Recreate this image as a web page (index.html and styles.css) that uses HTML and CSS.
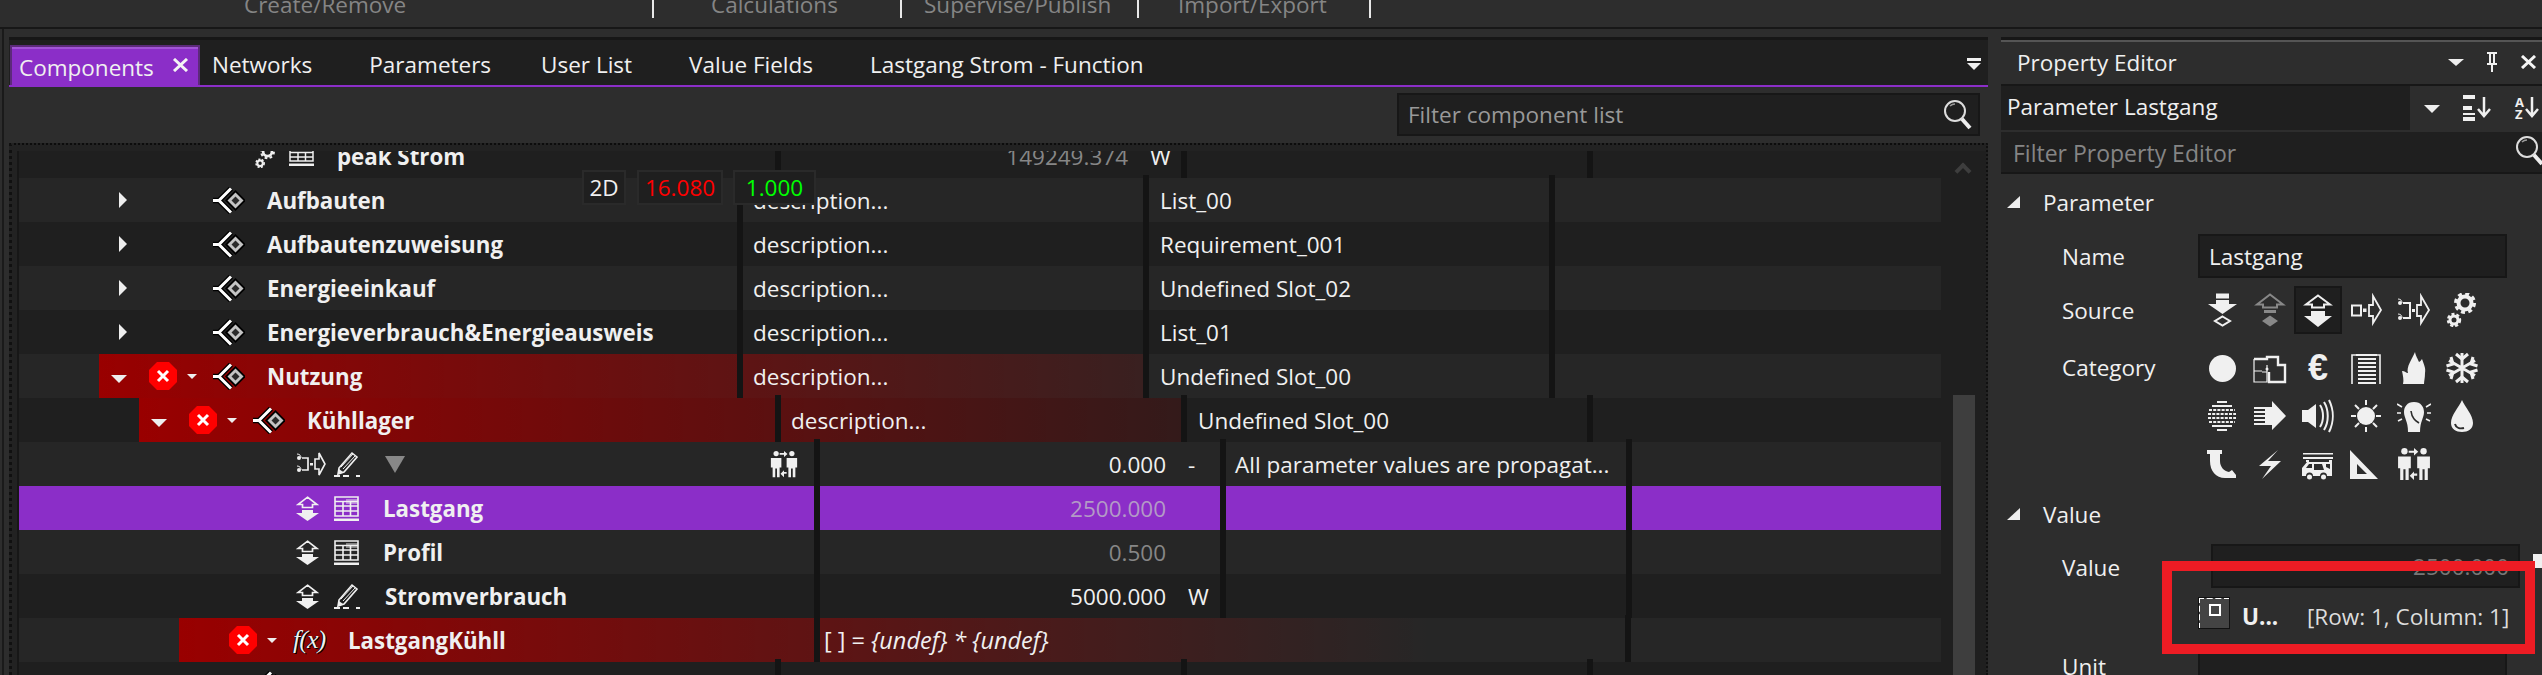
FILE: index.html
```html
<!DOCTYPE html>
<html lang="de">
<head>
<meta charset="utf-8">
<title>Components</title>
<link rel="stylesheet" href="styles.css">
</head>
<body>
<svg class="defs" xmlns="http://www.w3.org/2000/svg">
  <symbol id="close" viewBox="0 0 17 14">
    <path d="M2 1L15 13M15 1L2 13" stroke="#f4f4f4" stroke-width="3"/>
  </symbol>
  <symbol id="comp" viewBox="0 0 32 27">
    <path d="M22.500 3L33 13.500L22.500 24L12 13.500Z" fill="#000"/>
    <path d="M22.500 5.500L30.500 13.500L22.500 21.500L14.500 13.500Z" fill="#c4c4c4"/>
    <path d="M22.500 9.500L26.500 13.500L22.500 17.500L18.500 13.500Z" fill="#2a2a2a"/>
    <path d="M0 13.500H6M18 1.500L6 13.500L18 25.500" fill="none" stroke="#000" stroke-width="5.500"/>
    <path d="M0 13.500H6M18 1.500L6 13.500L18 25.500" fill="none" stroke="#fff" stroke-width="3"/>
  </symbol>
  <symbol id="stop" viewBox="0 0 28 28">
    <path d="M8 0H20L28 8V20L20 28H8L0 20V8Z" fill="#f00"/>
    <path d="M9 9L19 19M19 9L9 19" stroke="#fff" stroke-width="3"/>
  </symbol>
  <symbol id="updown" viewBox="0 0 23 25">
    <path d="M11.500 1.200L21 8.500H16.500V11.500H6.500V8.500H2Z" fill="none" stroke="currentColor" stroke-width="1.700"/>
    <path d="M6 14H17V17H23L11.500 25L0 17H6Z" fill="currentColor"/>
  </symbol>
  <symbol id="table" viewBox="0 0 25 25">
    <path d="M1 1H24V20H1ZM1 5.500H24M1 10H24M1 15H24M9 5.500V20M16.500 5.500V20" fill="none" stroke="currentColor" stroke-width="1.600"/>
    <path d="M0 22.500H25V25H0Z" fill="currentColor"/>
    <path d="M12 3H24V8H12Z" fill="currentColor" opacity=".45"/>
  </symbol>
  <symbol id="grid" viewBox="0 0 25 19">
    <path d="M1 1H24V14H1ZM1 5.500H24M1 10H24M9 5.500V14M16.500 5.500V14" fill="none" stroke="currentColor" stroke-width="1.500"/>
    <path d="M0 16.500H25V19H0Z" fill="currentColor"/>
  </symbol>
  <symbol id="pencil" viewBox="0 0 26 27">
    <path d="M5 17L18 2L23 6L10 21L4 23Z" fill="none" stroke="currentColor" stroke-width="1.600"/>
    <path d="M7 16L19 3M9 18L21 5" stroke="currentColor" stroke-width="1"/>
    <path d="M4 23L5 18L9 21Z" fill="currentColor"/>
    <path d="M0 25H6M9 25H15M22 25H26" stroke="currentColor" stroke-width="2"/>
  </symbol>
  <symbol id="flow" viewBox="0 0 30 24">
    <circle cx="3" cy="6" r="2" fill="currentColor"/><circle cx="3" cy="18" r="2" fill="currentColor"/>
    <path d="M1 2C4 2 5 4 5 6M1 14C4 14 5 16 5 18" fill="none" stroke="currentColor" stroke-width="1"/>
    <path d="M6 6H12V18H6" fill="none" stroke="currentColor" stroke-width="1.700"/>
    <path d="M14 11H17V13.500H14Z" fill="currentColor"/>
    <path d="M19 7H23V1L29 12L23 23V17H19Z" fill="none" stroke="currentColor" stroke-width="1.600"/>
  </symbol>
  <symbol id="gears" viewBox="0 0 34 34">
    <circle cx="20" cy="10" r="6.500" fill="none" stroke="currentColor" stroke-width="4"/>
    <circle cx="20" cy="10" r="9.500" fill="none" stroke="currentColor" stroke-width="3" stroke-dasharray="4 3.450"/>
    <circle cx="9" cy="27" r="4" fill="none" stroke="currentColor" stroke-width="3"/>
    <circle cx="9" cy="27" r="6" fill="none" stroke="currentColor" stroke-width="2.400" stroke-dasharray="3 2"/>
  </symbol>
  <symbol id="persons" viewBox="0 0 32 30">
    <circle cx="7" cy="3" r="3" fill="currentColor"/><circle cx="25" cy="3" r="3" fill="currentColor"/>
    <path d="M1 8H13V19H11V30H8V20H6V30H3V19H1Z" fill="currentColor"/>
    <path d="M19 8H31V19H29V30H26V20H24V30H21V19H19Z" fill="currentColor"/>
    <path d="M11 2.500H16V0L20 3.500L16 7V4.500H11Z" fill="currentColor"/>
    <path d="M19 24H16V22L12 26L16 30V26H19Z" fill="currentColor"/>
  </symbol>
  <symbol id="search" viewBox="0 0 30 32">
    <circle cx="12" cy="12" r="10" fill="none" stroke="#ddd" stroke-width="2"/>
    <path d="M19 20L27 29" stroke="#eee" stroke-width="4"/>
    <path d="M7 7C8 6 10 5 12 5" fill="none" stroke="#999" stroke-width="1.500"/>
  </symbol>
  <symbol id="i-in" viewBox="0 0 34 34">
    <path d="M11 .5H24V5.500H11ZM11 7H24V11H32L17.500 21L3 11H11Z" fill="currentColor"/>
    <path d="M17.500 23.500L25 28L17.500 32.500L10 28Z" fill="none" stroke="currentColor" stroke-width="2"/>
  </symbol>
  <symbol id="i-out" viewBox="0 0 34 34">
    <path d="M17 1.500L30 11.500H24V14.500H10V11.500H4Z" fill="none" stroke="currentColor" stroke-width="2"/>
    <path d="M11 17H23V20H11ZM17 22.500L25 28L17 33.500L9 28Z" fill="currentColor"/>
  </symbol>
  <symbol id="i-both" viewBox="0 0 34 34">
    <path d="M17 2.500L29 11.500H23V14.500H11V11.500H5Z" fill="none" stroke="currentColor" stroke-width="2"/>
    <path d="M10 18H24V23H31L17 34L3 23H10Z" fill="currentColor"/>
  </symbol>
  <symbol id="i-port" viewBox="0 0 34 34">
    <path d="M3 12.500H12V22.500H3Z" fill="none" stroke="currentColor" stroke-width="2"/>
    <path d="M14 15.500H17.500V19H14Z" fill="currentColor"/>
    <path d="M20 12H24V3L32 17L24 30V23H20Z" fill="none" stroke="currentColor" stroke-width="1.800"/>
  </symbol>
  <symbol id="i-fork" viewBox="0 0 34 34">
    <circle cx="3" cy="10" r="2" fill="currentColor"/><circle cx="3" cy="25" r="2" fill="currentColor"/>
    <path d="M1 6C4 6 5 8 5 10M1 21C4 21 5 23 5 25" fill="none" stroke="currentColor" stroke-width="1"/>
    <path d="M6 10H13V25H6" fill="none" stroke="currentColor" stroke-width="2"/>
    <path d="M15 16H18V19H15Z" fill="currentColor"/>
    <path d="M20 12H24V3L32 17L24 30V23H20Z" fill="none" stroke="currentColor" stroke-width="1.800"/>
  </symbol>
  <symbol id="c-plan" viewBox="0 0 34 34">
    <path d="M1 8H14V6H25V14H32V31H16V21" fill="none" stroke="currentColor" stroke-width="2.400"/>
    <path d="M1 8V31H14V21H9M1 20H9M14 14V21" fill="none" stroke="currentColor" stroke-width="1.200"/>
    <circle cx="14" cy="18" r="1.500" fill="currentColor"/>
  </symbol>
  <symbol id="c-doc" viewBox="0 0 34 34">
    <path d="M3 33V4H31V33" fill="none" stroke="currentColor" stroke-width="1.600"/>
    <path d="M7 4H28M9 8H27M9 12H27M9 16H27M9 20H27M9 24H27M9 28H27M9 32H27" stroke="currentColor" stroke-width="2"/>
  </symbol>
  <symbol id="c-flame" viewBox="0 0 34 34">
    <path d="M18 1C19 6 21 8 22 11C24 10 24 9 25 8C27 14 29 17 28 22C28 27 27 30 27 33H6C7 29 6 25 5 20C8 20 9 22 11 22C9 16 15 8 18 1Z" fill="currentColor"/>
  </symbol>
  <symbol id="c-snow" viewBox="0 0 34 34">
    <g stroke="currentColor" stroke-width="3" fill="none">
      <path d="M17 2V32M4 9.500L30 24.500M4 24.500L30 9.500"/>
      <path d="M11 3L17 8L23 3M11 31L17 26L23 31M1.500 15L8 13L6 6M32.500 15L26 13L28 6M1.500 19L8 21L6 28M32.500 19L26 21L28 28"/>
    </g>
  </symbol>
  <symbol id="c-globe" viewBox="0 0 34 34">
    <g stroke="currentColor" stroke-width="2" fill="none">
      <path d="M12 3H22M7 7H27"/>
      <path d="M4 11H30M3 15H31M3 19H31M4 23H30" stroke-dasharray="3 1.200"/>
      <path d="M7 27H27M12 31H22"/>
    </g>
  </symbol>
  <symbol id="c-arrow" viewBox="0 0 34 34">
    <path d="M1 9H12M1 13H12M1 17H12M1 21H12M1 25H12" stroke="currentColor" stroke-width="2"/>
    <path d="M12 8H19V2L33 17L19 31V26H12Z" fill="currentColor"/>
  </symbol>
  <symbol id="c-sound" viewBox="0 0 34 34">
    <path d="M1 11H7L15 5V29L7 23H1Z" fill="currentColor"/>
    <path d="M19 6C23 12 23 22 19 28M23 3C28 11 28 23 23 31M28 1C33 11 33 23 28 33" fill="none" stroke="currentColor" stroke-width="2"/>
  </symbol>
  <symbol id="c-sun" viewBox="0 0 34 34">
    <circle cx="17" cy="17" r="9" fill="currentColor"/>
    <path d="M17 1V6M17 28V33M2 17H7M27 17H32M6 6L10 10M24 24L28 28M28 6L24 10M10 24L6 28" stroke="currentColor" stroke-width="2"/>
  </symbol>
  <symbol id="c-bulb" viewBox="0 0 34 34">
    <path d="M17 3C24 3 27 8 27 13C27 19 23 22 23 33H11C11 22 7 19 7 13C7 8 10 3 17 3Z" fill="currentColor"/>
    <path d="M14 12C15 20 19 22 22 24" fill="none" stroke="#2d2d2d" stroke-width="1.600"/>
    <path d="M0 5L5 8M34 5L29 8M0 14H4M34 14H30M1 22L5 20M33 22L29 20" stroke="currentColor" stroke-width="1.600"/>
  </symbol>
  <symbol id="c-drop" viewBox="0 0 34 34">
    <path d="M17 1C20 8 28 16 28 24C28 30 23 33 17 33C11 33 6 30 6 24C6 16 14 8 17 1Z" fill="currentColor"/>
    <path d="M10 25C11 29 15 30 19 29" fill="none" stroke="#2d2d2d" stroke-width="2"/>
  </symbol>
  <symbol id="c-pipe" viewBox="0 0 34 34">
    <path d="M2 3H17V7H15V14C15 20 19 24 24 25L27 23L31 28V31H20C11 31 5 24 5 14V7H2Z" fill="currentColor"/>
  </symbol>
  <symbol id="c-bolt" viewBox="0 0 34 34">
    <path d="M25 3L6 19H18L9 32L28 14H15Z" fill="currentColor"/>
  </symbol>
  <symbol id="c-van" viewBox="0 0 34 34">
    <path d="M2 6H32V7.500H2ZM2 10H32V12H2ZM5 13H8V15H5ZM28 13H31V15H28Z" fill="currentColor"/>
    <path d="M1 29V21L6 15H31V29H26A3.500 3.500 0 0 0 19 29H12A3.500 3.500 0 0 0 5 29ZM8 17L5 21H11V17ZM13 17V23H23L21 17ZM25 17V20L29 22V17Z" fill="currentColor" fill-rule="evenodd"/>
    <circle cx="8.500" cy="30" r="2.500" fill="currentColor"/><circle cx="22.500" cy="30" r="2.500" fill="currentColor"/>
  </symbol>
  <symbol id="c-square" viewBox="0 0 34 34">
    <path d="M1 3L29 32H1ZM8 17V27H18Z" fill="currentColor" fill-rule="evenodd"/>
  </symbol>
</svg>

<header class="topbar">
  <span class="top-a">Create/Remove</span><i class="top-sep sep-a"></i>
  <span class="top-b">Calculations</span><i class="top-sep sep-b"></i>
  <span class="top-c">Supervise/Publish</span><i class="top-sep sep-c"></i>
  <span class="top-d">Import/Export</span><i class="top-sep sep-d"></i>
</header>

<main class="main">
  <section class="left">
    <nav class="tabs">
      <div class="tab active">Components<svg class="tab-x"><use href="#close"/></svg></div>
      <div class="tab">Networks</div>
      <div class="tab tab-tight">Parameters</div>
      <div class="tab">User List</div>
      <div class="tab">Value Fields</div>
      <div class="tab">Lastgang Strom - Function</div>
      <div class="tab-menu"><i class="menu-bar"></i><i class="menu-tri"></i></div>
    </nav>
    <div class="toolbar">
      <div class="filter">
        <span>Filter component list</span>
        <svg class="search-ic"><use href="#search"/></svg>
      </div>
    </div>
    <div class="tree">
      <div class="rows">
        <div class="row d2 peak">
          <div class="band">
            <div class="hot plain">
              <div class="cell name"><span class="peak-pad"><svg class="gear-s"><use href="#gears"/></svg><svg class="grid-s"><use href="#grid"/></svg></span><b>peak Strom</b></div>
              <div class="cell val"><span class="num dim">149249.374</span><span class="unit">W</span></div>
            </div>
            <div class="cell col3"></div><div class="cell end"></div>
          </div>
        </div>
        <div class="row alt d1"><div class="band"><div class="hot plain">
          <div class="cell name"><i class="slot-e"><i class="tri-r"></i></i><i class="slot-s"></i><i class="slot-d"></i><svg class="comp"><use href="#comp"/></svg><b>Aufbauten</b></div>
          <div class="cell val"><span class="txt">description...</span></div></div>
          <div class="cell col3"><span class="txt">List_00</span></div><div class="cell end"></div></div></div>
        <div class="row d1"><div class="band"><div class="hot plain">
          <div class="cell name"><i class="slot-e"><i class="tri-r"></i></i><i class="slot-s"></i><i class="slot-d"></i><svg class="comp"><use href="#comp"/></svg><b>Aufbautenzuweisung</b></div>
          <div class="cell val"><span class="txt">description...</span></div></div>
          <div class="cell col3"><span class="txt">Requirement_001</span></div><div class="cell end"></div></div></div>
        <div class="row alt d1"><div class="band"><div class="hot plain">
          <div class="cell name"><i class="slot-e"><i class="tri-r"></i></i><i class="slot-s"></i><i class="slot-d"></i><svg class="comp"><use href="#comp"/></svg><b>Energieeinkauf</b></div>
          <div class="cell val"><span class="txt">description...</span></div></div>
          <div class="cell col3"><span class="txt">Undefined Slot_02</span></div><div class="cell end"></div></div></div>
        <div class="row d1"><div class="band"><div class="hot plain">
          <div class="cell name"><i class="slot-e"><i class="tri-r"></i></i><i class="slot-s"></i><i class="slot-d"></i><svg class="comp"><use href="#comp"/></svg><b>Energieverbrauch&amp;Energieausweis</b></div>
          <div class="cell val"><span class="txt">description...</span></div></div>
          <div class="cell col3"><span class="txt">List_01</span></div><div class="cell end"></div></div></div>
        <div class="row alt d1"><div class="band"><div class="hot">
          <div class="cell name"><i class="slot-e"><i class="tri-d"></i></i><i class="slot-s"><svg class="stop"><use href="#stop"/></svg></i><i class="slot-d"><i class="tri-s"></i></i><svg class="comp"><use href="#comp"/></svg><b>Nutzung</b></div>
          <div class="cell val"><span class="txt">description...</span></div></div>
          <div class="cell col3"><span class="txt">Undefined Slot_00</span></div><div class="cell end"></div></div></div>
        <div class="row d2"><div class="band"><div class="hot">
          <div class="cell name"><i class="slot-e"><i class="tri-d"></i></i><i class="slot-s"><svg class="stop"><use href="#stop"/></svg></i><i class="slot-d"><i class="tri-s"></i></i><svg class="comp"><use href="#comp"/></svg><b>Kühllager</b></div>
          <div class="cell val"><span class="txt">description...</span></div></div>
          <div class="cell col3"><span class="txt">Undefined Slot_00</span></div><div class="cell end"></div></div></div>
        <div class="row alt d3"><div class="band"><div class="hot plain">
          <div class="cell name param"><svg class="flow"><use href="#flow"/></svg><svg class="pen"><use href="#pencil"/></svg><i class="filter-tri"></i><svg class="people"><use href="#persons"/></svg></div>
          <div class="cell val"><span class="num">0.000</span><span class="unit">-</span></div></div>
          <div class="cell col3"><span class="txt">All parameter values are propagat...</span></div><div class="cell end"></div></div></div>
        <div class="row sel d3"><div class="band"><div class="hot plain">
          <div class="cell name param"><svg class="ud"><use href="#updown"/></svg><svg class="tbl"><use href="#table"/></svg><b>Lastgang</b></div>
          <div class="cell val"><span class="num dim-sel">2500.000</span><span class="unit"></span></div></div>
          <div class="cell col3"></div><div class="cell end"></div></div></div>
        <div class="row alt d3"><div class="band"><div class="hot plain">
          <div class="cell name param"><svg class="ud"><use href="#updown"/></svg><svg class="tbl"><use href="#table"/></svg><b>Profil</b></div>
          <div class="cell val"><span class="num dim">0.500</span><span class="unit"></span></div></div>
          <div class="cell col3"></div><div class="cell end"></div></div></div>
        <div class="row d3"><div class="band"><div class="hot plain">
          <div class="cell name param"><svg class="ud"><use href="#updown"/></svg><svg class="pen"><use href="#pencil"/></svg><b>Stromverbrauch</b></div>
          <div class="cell val"><span class="num">5000.000</span><span class="unit">W</span></div></div>
          <div class="cell col3"></div><div class="cell end"></div></div></div>
        <div class="row alt d3"><div class="band"><div class="hot wide">
          <div class="cell name"><i class="slot-e"></i><i class="slot-s"><svg class="stop"><use href="#stop"/></svg></i><i class="slot-d"><i class="tri-s"></i></i><span class="fx">f(x)</span><b>LastgangKühll</b></div>
          <div class="cell formula"><span class="txt">[ ] = <em>{undef} * {undef}</em></span></div></div>
          <div class="cell end"></div></div></div>
        <div class="row d2"><div class="band"><div class="hot plain">
          <div class="cell name"><i class="slot-e"></i><i class="slot-s"></i><i class="slot-d"></i><svg class="comp"><use href="#comp"/></svg></div>
          <div class="cell val"></div></div>
          <div class="cell col3"></div><div class="cell end"></div></div></div>
      </div>
      <aside class="scroll"><i class="chev"></i><i class="thumb"></i></aside>
      <div class="badges">
        <span class="badge b-2d">2D</span>
        <span class="badge b-red">16.080</span>
        <span class="badge b-green">1.000</span>
      </div>
    </div>
  </section>

  <section class="right">
    <div class="title">
      <span class="title-txt">Property Editor</span>
      <i class="title-tri"></i>
      <svg class="pin" viewBox="0 0 12 20"><path d="M1 0H11V2H9V11H11V13H7V20H5V13H1V11H3V2H1ZM5 2V11H7V2Z" fill="#f0f0f0" fill-rule="evenodd"/></svg>
      <svg class="title-x"><use href="#close"/></svg>
    </div>
    <div class="combo">
      <div class="combo-txt">Parameter Lastgang</div>
      <div class="btn b-drop"><i class="tri-d"></i></div>
      <div class="btn b-sort"><svg viewBox="0 0 28 26"><path d="M0 0H12V4H0ZM0 11H9V15H0ZM0 18H12V20H0ZM0 22H12V26H0Z" fill="#f0f0f0"/><path d="M21 2V20M15 14L21 21L27 14" fill="none" stroke="#f0f0f0" stroke-width="2.500"/></svg></div>
      <div class="btn b-az"><span class="az">A<br>Z</span><svg viewBox="0 0 14 26"><path d="M7 2V20M1 14L7 21L13 14" fill="none" stroke="#f0f0f0" stroke-width="2.500"/></svg></div>
    </div>
    <div class="pfilter">
      <span>Filter Property Editor</span>
      <svg class="psearch"><use href="#search"/></svg>
    </div>
    <div class="pbody">
      <div class="sec sec-a"><i class="sec-tri"></i>Parameter</div>
      <div class="prow p-name"><label>Name</label><div class="input">Lastgang</div></div>
      <div class="pgrid">
        <label class="l-source">Source</label>
        <div class="icons">
          <span class="ic"><svg><use href="#i-in"/></svg></span>
          <span class="ic grey"><svg><use href="#i-out"/></svg></span>
          <span class="ic on"><svg><use href="#i-both"/></svg></span>
          <span class="ic"><svg><use href="#i-port"/></svg></span>
          <span class="ic"><svg><use href="#i-fork"/></svg></span>
          <span class="ic"><svg><use href="#gears"/></svg></span>
        </div>
        <label class="l-cat">Category</label>
        <div class="icons cats">
          <span class="ic"><i class="dot"></i></span>
          <span class="ic"><svg><use href="#c-plan"/></svg></span>
          <span class="ic euro">€</span>
          <span class="ic"><svg><use href="#c-doc"/></svg></span>
          <span class="ic"><svg><use href="#c-flame"/></svg></span>
          <span class="ic"><svg><use href="#c-snow"/></svg></span>
          <span class="ic"><svg><use href="#c-globe"/></svg></span>
          <span class="ic"><svg><use href="#c-arrow"/></svg></span>
          <span class="ic"><svg><use href="#c-sound"/></svg></span>
          <span class="ic"><svg><use href="#c-sun"/></svg></span>
          <span class="ic"><svg><use href="#c-bulb"/></svg></span>
          <span class="ic"><svg><use href="#c-drop"/></svg></span>
          <span class="ic"><svg><use href="#c-pipe"/></svg></span>
          <span class="ic"><svg><use href="#c-bolt"/></svg></span>
          <span class="ic"><svg><use href="#c-van"/></svg></span>
          <span class="ic"><svg><use href="#c-square"/></svg></span>
          <span class="ic"><svg><use href="#persons"/></svg></span>
        </div>
      </div>
      <div class="sec sec-v"><i class="sec-tri"></i>Value</div>
      <div class="prow p-val"><label>Value</label><div class="input right">2500.000</div><i class="val-btn"></i></div>
      <div class="prow p-ref">
        <i class="ref-ic"><i class="ref-sq"></i></i>
        <b class="ref-u">U...</b>
        <span class="ref-t">[Row: 1, Column: 1]</span>
      </div>
      <div class="prow p-unit"><label>Unit</label><div class="input"></div></div>
      <div class="redbox"></div>
    </div>
  </section>
</main>
</body>
</html>
```
FILE: styles.css
```css
* { box-sizing: border-box; }
html, body { margin: 0; height: 675px; overflow: hidden; }
body {
  background: #2d2d2d;
  color: #f0f0f0;
  font-family: "Open Sans", "Noto Sans", "Liberation Sans", sans-serif;
  font-size: 22.5px;
}
i, em { font-style: normal; }
.defs { display: none; }

.topbar {
  height: 29px;
  border-bottom: 2px solid #171717;
  display: flex;
  color: #858585;
  line-height: 10px;
  padding-left: 244px;
  overflow: hidden;
}
.top-sep { width: 2px; height: 18px; background: #e8e8e8; }
.top-a { width: 408px; }
.sep-a { margin-right: 57px; }
.top-b { width: 189px; }
.sep-b { margin-right: 22px; }
.top-c { width: 213px; }
.sep-c { margin-right: 39px; }
.top-d { width: 191px; }

.main {
  display: flex;
  height: 646px;
  margin-left: 2px;
  padding-top: 8px;
  border-left: 2px solid #1a1a1a;
}
.left {
  width: 1979px;
  margin-left: 5px;
  border-top: 3px solid #171717;
  display: flex;
  flex-direction: column;
  min-width: 0;
}
.tabs {
  height: 47px;
  flex: none;
  background: #1f1f1f;
  border-bottom: 2px solid #8b2ec8;
  display: flex;
  align-items: flex-end;
  padding-left: 1px;
  position: relative;
}
.tab {
  height: 40px;
  line-height: 39px;
  padding: 0 12px;
  margin-right: 33px;
  white-space: nowrap;
}
.tab-tight { margin-right: 26px; }
.tab.active {
  width: 190px;
  margin-right: 0;
  padding: 2px 9px 0 7px;
  background: #8b2ec8;
  border: 2px solid #5c2a7a;
  border-bottom: 0;
  box-shadow: inset 0 2px #a255d6;
  display: flex;
  align-items: center;
}
.tab-x { width: 17px; height: 14px; margin: 0 0 4px auto; }
.tab-menu {
  position: absolute;
  right: 7px;
  top: 18px;
  width: 14px;
}
.menu-bar { display: block; height: 3px; background: #f0f0f0; margin-bottom: 2px; }
.menu-tri { display: block; border: 7px solid transparent; border-top-color: #f0f0f0; border-bottom: 0; }

.toolbar {
  height: 56px;
  flex: none;
  display: flex;
  justify-content: flex-end;
  padding: 6px 8px 7px 0;
  background: #2d2d2d;
}
.filter {
  width: 583px;
  background: #1f1f1f;
  border: 2px solid #171717;
  display: flex;
  align-items: center;
  justify-content: space-between;
  padding: 0 5px 0 9px;
  color: #999;
  font-size: 22.500px;
}
.search-ic { width: 30px; height: 32px; }

.tree {
  flex: 1;
  min-height: 0;
  position: relative;
  display: flex;
  border-top: 2px dotted #0c0c0c;
  border-left: 3px dotted #101010;
  border-right: 2px dotted #101010;
  padding: 6px 0 0 5px;
  background: #222;
}
.rows {
  width: 1924px;
  flex: none;
  overflow: hidden;
  border-left: 2px solid #171717;
}
.scroll {
  flex: 1;
  position: relative;
  background: #1f1f1f;
}
.chev {
  position: absolute;
  left: 16px;
  top: 14px;
  width: 12px;
  height: 12px;
  border: solid #3e3e3e;
  border-width: 4px 0 0 4px;
  transform: rotate(45deg);
}
.thumb {
  position: absolute;
  left: 12px;
  top: 244px;
  bottom: 0;
  width: 22px;
  background: #3e3e3e;
}

.row { height: 44px; background: #1f1f1f; display: flex; }
.row.alt { background: #262626; }
.row.sel { background: #8b2ec8; }
.row.peak { margin-top: -17px; }
.band { flex: 1; display: flex; min-width: 0; }
.d1 .band { margin-left: 80px; }
.d2 .band { margin-left: 120px; }
.d3 .band { margin-left: 160px; }
.hot {
  display: flex;
  background: linear-gradient(90deg, #990000, rgba(38, 38, 38, 0)) 0 0 / 1250px 100% no-repeat;
}
.hot.plain { background: none; }
.cell {
  height: 44px;
  display: flex;
  align-items: center;
  position: relative;
  border-right: 6px solid #141414;
  white-space: nowrap;
}
.cell::after {
  content: "";
  position: absolute;
  right: -6px;
  top: -3px;
  width: 6px;
  height: 3px;
  background: #141414;
}
.cell.end { flex: 1; border: 0; }
.cell.end::after { display: none; }
.cell.name { padding-left: 12px; }
.d1 .name { width: 644px; }
.d2 .name { width: 642px; }
.d3 .name { width: 641px; }
.val, .col3 { width: 406px; }
.val { padding-left: 10px; }
.col3 { padding-left: 11px; }
.d3 .col3 { padding-left: 9px; }
.formula { width: 811px; padding-left: 4px; font-size: 23.500px; }
.formula em { font-style: italic; }
.name b { font-weight: 700; font-size: 22.300px; }
.num { width: 347px; text-align: right; margin-left: -10px; }
.unit { margin-left: 22px; }
.d3 .num { width: 346px; }
.dim { color: #878787; }
.dim-sel { color: #b39ac6; }

.slot-e { width: 38px; display: flex; }
.slot-s { width: 38px; display: flex; }
.slot-d { width: 26px; display: flex; }
.tri-r { border-left: 8px solid #eee; border-top: 8px solid transparent; border-bottom: 8px solid transparent; margin-left: 8px; }
.tri-d { border-top: 8px solid #eee; border-left: 8px solid transparent; border-right: 8px solid transparent; margin-top: 2px; }
.slot-e .tri-d { margin-top: 6px; }
.slot-s { height: 28px; }
.slot-d { align-items: center; height: 28px; }
.tri-s { border-top: 5px solid #eee; border-left: 5px solid transparent; border-right: 5px solid transparent; }
.stop { width: 28px; height: 28px; }
.comp { width: 32px; height: 27px; margin-right: 22px; flex: none; overflow: visible; }
.fx {
  width: 55px;
  font: italic 26px "Liberation Serif", serif;
  letter-spacing: -1px;
  text-shadow: 1px 1px 0 #000, -1px 0 0 #000;
}
.peak-pad { display: flex; padding-left: 103px; align-items: center; }
.gear-s { width: 23px; height: 23px; margin-right: 12px; }
.grid-s { width: 25px; height: 19px; margin-right: 23px; }
.name.param { padding-left: 117px; }
.flow { width: 30px; height: 24px; margin-right: 8px; }
.ud { width: 23px; height: 25px; margin-right: 15px; }
.tbl { width: 25px; height: 25px; margin-right: 24px; }
.pen { width: 26px; height: 27px; margin-right: 25px; }
.filter-tri { border-top: 17px solid #888; border-left: 10px solid transparent; border-right: 10px solid transparent; }
.people { width: 28px; height: 28px; margin-left: 365px; }

.badges {
  position: absolute;
  left: 570px;
  top: 25px;
  display: flex;
  align-items: stretch;
  height: 35px;
  line-height: 31px;
}
.badge {
  background: #1f1f1f;
  border: 2px solid #2a2a2a;
  text-align: center;
}
.b-2d { width: 44px; margin-right: 11px; }
.b-red { width: 86px; margin-right: 10px; color: #f00; }
.b-green { width: 83px; color: #0f0; }

.right {
  width: 541px;
  margin-left: 13px;
  display: flex;
  flex-direction: column;
  border-top: 3px solid #171717;
}
.title {
  height: 46px;
  flex: none;
  border-top: 2px solid #555;
  border-bottom: 2px solid #171717;
  display: flex;
  align-items: center;
  padding: 0 0 2px 16px;
}
.title-txt { width: 431px; }
.title-tri { border-top: 7px solid #eee; border-left: 8px solid transparent; border-right: 8px solid transparent; }
.pin { width: 12px; height: 20px; margin-left: 22px; }
.title-x { width: 17px; height: 14px; margin-left: 22px; }
.combo { height: 44px; flex: none; display: flex; }
.combo-txt {
  width: 409px;
  background: #1f1f1f;
  padding-left: 6px;
  line-height: 42px;
}
.btn { height: 44px; display: flex; align-items: center; justify-content: center; margin-left: 2px; background: #2d2d2d; }
.b-drop { width: 40px; }
.b-sort { width: 46px; }
.b-sort svg { width: 28px; height: 26px; }
.b-az { flex: 1; justify-content: flex-start; padding-left: 13px; gap: 1px; overflow: hidden; }
.b-az svg { width: 14px; height: 26px; flex: none; }
.az { font-size: 13px; line-height: 12px; font-weight: 700; }
.pfilter {
  height: 42px;
  flex: none;
  margin-top: 2px;
  background: #1f1f1f;
  border-bottom: 2px solid #171717;
  color: #858585;
  display: flex;
  align-items: center;
  justify-content: space-between;
  padding: 2px 0 0 12px;
  font-size: 23px;
}
.psearch { width: 30px; height: 32px; margin: -4px -3px 0 0; flex: none; }

.pbody { flex: 1; position: relative; min-height: 0; }
.sec { display: flex; align-items: center; padding-left: 6px; }
.sec-a { height: 56px; }
.sec-v { height: 52px; }
.sec-tri {
  width: 0;
  height: 0;
  border-bottom: 12px solid #eee;
  border-left: 13px solid transparent;
  margin-right: 23px;
}
.prow { display: flex; align-items: center; }
.prow label { width: 136px; margin-left: 61px; flex: none; }
.input {
  width: 309px;
  height: 44px;
  flex: none;
  background: #1f1f1f;
  border: 2px solid #171717;
  padding: 0 9px;
  line-height: 42px;
}
.input.right { text-align: right; color: #777; }
.p-name { margin: 4px 0 8px; }
.p-val { margin-top: 4px; }
.p-val label { padding-top: 3px; }
.val-btn { width: 14px; height: 14px; margin: 0 0 10px 13px; background: #f0f0f0; }
.p-ref { height: 56px; padding-left: 197px; }
.ref-ic {
  width: 32px;
  height: 32px;
  background: #444;
  border-top: 2px dashed #fff;
  border-left: 2px dashed #fff;
  outline: 1px solid #111;
  outline-offset: -1px;
  display: flex;
  align-items: center;
  justify-content: center;
  margin-bottom: 6px;
}
.ref-sq { width: 12px; height: 12px; border: 2px solid #fff; margin-bottom: 8px; }
.ref-u { margin-left: 12px; width: 65px; }
.ref-t { color: #ddd; font-size: 22.500px; white-space: nowrap; }
.pgrid { display: grid; grid-template-columns: 197px 1fr; }
.pgrid label { padding-left: 61px; }
.l-source { line-height: 50px; }
.l-cat { line-height: 48px; margin-top: 8px; }
.icons { display: grid; grid-template-columns: repeat(6, 48px); grid-auto-rows: 48px; }
.cats { margin-top: 8px; }
.ic { display: flex; align-items: center; justify-content: center; color: #f0f0f0; border: 2px solid transparent; }
.ic svg { width: 34px; height: 34px; }
.ic.grey { color: #888; }
.ic.on { background: #1f1f1f; border-color: #171717; }
.dot { width: 27px; height: 27px; border-radius: 50%; background: #f0f0f0; }
.euro { font: 700 36px "Liberation Sans", sans-serif; }
.redbox {
  position: absolute;
  left: 161px;
  top: 387px;
  width: 373px;
  height: 93px;
  border: 10px solid #ed1c24;
}
```
